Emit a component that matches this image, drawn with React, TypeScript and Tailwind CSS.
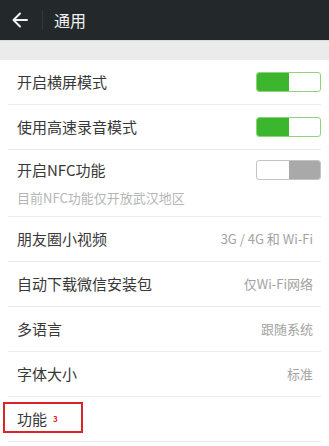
import React from 'react';

const font = { fontFamily: '"Noto Sans CJK SC", "Noto Sans", sans-serif' };

const Toggle = ({ on }: { on: boolean }) =>
  on ? (
    <div className="flex h-[20px] w-[65px] overflow-hidden rounded-[3px] border border-[#8fd47a] bg-white">
      <div className="h-full w-1/2 bg-[#3cb62d]" />
    </div>
  ) : (
    <div className="flex h-[20px] w-[65px] justify-end overflow-hidden rounded-[3px] border border-[#c4c4c4] bg-white">
      <div className="h-full w-1/2 bg-[#a9a9a9]" />
    </div>
  );

const Row = ({ label, value, children }: { label: React.ReactNode; value?: string; children?: React.ReactNode }) => (
  <div className="mx-2 flex h-[45px] items-center justify-between border-b border-[#ececec] pl-[9px] pr-0">
    <span className="text-[15px] text-[#383838]">{label}</span>
    {value && <span className="mr-[8px] text-[13px] text-[#a3a3a3]">{value}</span>}
    {children}
  </div>
);

export default function App() {
  return (
    <div className="h-[446px] w-[329px] overflow-hidden bg-white" style={font}>
      <div className="flex h-[40px] items-center bg-[#23292b]">
        <svg width="42" height="40" viewBox="0 0 42 40" className="shrink-0">
          <path d="M27 20H14M20 13.5L13.5 20L20 26.5" stroke="#f2f2f2" strokeWidth="2" fill="none" strokeLinecap="round" strokeLinejoin="round" />
        </svg>
        <div className="h-[20px] w-px bg-[#33393b]" />
        <span className="ml-[11px] text-[16px] text-[#f0f0f0]">通用</span>
      </div>
      <div className="h-[20px] border-t border-[#d9d9d9] bg-[#ebebeb]" />
      <div className="relative">
        <Row label="开启横屏模式">
          <Toggle on />
        </Row>
        <Row label="使用高速录音模式">
          <Toggle on />
        </Row>
        <div className="mx-2 flex h-[67px] flex-col justify-center border-b border-[#ececec] pl-[9px] pr-0">
          <div className="flex items-center justify-between">
            <span className="text-[15px] text-[#383838]">开启NFC功能</span>
            <Toggle on={false} />
          </div>
          <span className="mt-[6px] text-[13px] text-[#b5b5b5]">目前NFC功能仅开放武汉地区</span>
        </div>
        <Row label="朋友圈小视频" value="3G / 4G 和 Wi-Fi" />
        <Row label="自动下载微信安装包" value="仅Wi-Fi网络" />
        <Row label="多语言" value="跟随系统" />
        <Row label="字体大小" value="标准" />
        <Row
          label={
            <span className="flex items-center">
              功能
              <span className="ml-[6px] text-[8px] font-bold text-[#e0262b]">3</span>
            </span>
          }
        />
        <div className="pointer-events-none absolute left-[3px] top-[342px] h-[31px] w-[80px] border-2 border-[#d9252a]" />
      </div>
    </div>
  );
}
